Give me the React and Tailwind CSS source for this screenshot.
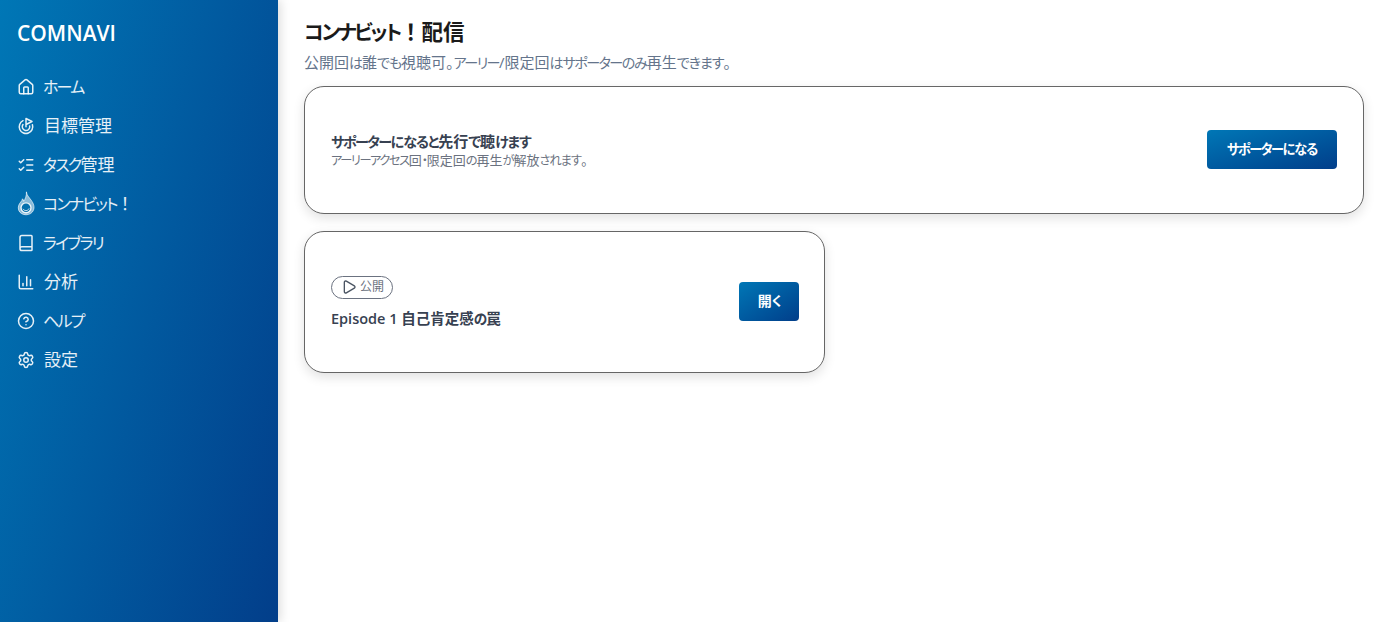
import { House, Goal, ListChecks, Book, ChartColumn, CircleHelp, Settings, Play } from 'lucide-react';

const font = { fontFamily: '"Open Sans", "Noto Sans CJK JP", sans-serif' };

// kana in the reference's font sits much narrower than in Noto, so shrink those runs
function Jp({ children }) {
  return children.split(/([\u30A0-\u30FF]+|[\u3040-\u309F]+|！)/).map((part, i) => {
    if (/^[\u30A0-\u30FF]/.test(part)) {
      return <span key={i} className="text-[0.94em] tracking-[-0.11em]">{part}</span>;
    }
    if (/^[\u3040-\u309F]/.test(part)) {
      return <span key={i} className="text-[0.94em] tracking-[-0.08em]">{part}</span>;
    }
    if (part === '！') {
      return <span key={i} className="[font-feature-settings:normal]">{part}</span>;
    }
    return part;
  });
}

function FlameIcon() {
  return (
    <svg width="20" height="27" viewBox="0 0 20 27" fill="none" stroke="currentColor" strokeLinecap="round">
      <path d="M10.500 1c.1 3.200 2.700 5.300 5.200 8.800 2.900 4 4 7.700 2.500 11.300-1.300 3.100-4.500 4.900-8.200 4.900-3.800 0-6.900-1.900-8.100-5C.7 17.400 2 14.200 4.200 11.800c1-1.100 1.700-2.100 1.900-3.500.8.800 1.300 1.700 1.300 2.800C9.300 8.500 10.800 4.800 10.500 1z" fill="currentColor" fillOpacity="0.6" strokeWidth="0.8" />
      <circle cx="10" cy="18.300" r="5.500" fill="#0470ae" strokeWidth="1.500" />
      <path d="M6.800 19.800c1.500 2.400 5.200 2.200 6.500-.4" strokeWidth="1" />
    </svg>
  );
}

const navItems = [
  { label: 'ホーム', icon: <House size={18} /> },
  { label: '目標管理', icon: <Goal size={18} />, textClass: 'ml-px' },
  { label: 'タスク管理', icon: <ListChecks size={18} /> },
  { label: 'コンナビット！', icon: <FlameIcon /> },
  { label: 'ライブラリ', icon: <Book size={18} /> },
  { label: '分析', icon: <ChartColumn size={18} />, textClass: 'ml-px' },
  { label: 'ヘルプ', icon: <CircleHelp size={18} /> },
  { label: '設定', icon: <Settings size={18} />, textClass: 'ml-px' },
];

function GradientButton({ children, className }) {
  return (
    <button className={`mb-[2px] h-[39px] rounded bg-gradient-to-br from-[#0077b6] to-[#023e8a] text-sm font-semibold text-white ${className}`}>
      <Jp>{children}</Jp>
    </button>
  );
}

export default function App() {
  return (
    <div className="flex h-[622px] w-[1374px] overflow-hidden bg-white [font-feature-settings:'palt']" style={font}>
      <aside className="z-10 flex w-[278px] shrink-0 flex-col bg-[linear-gradient(105deg,#0077b6,#023e8a)] pl-[17px] pt-[18px] text-white shadow-[2px_0_10px_rgba(0,0,0,0.15)]">
        <div className="h-[30px] text-[21px] leading-[30px] font-semibold">COMNAVI</div>
        <nav className="mt-[19px] flex flex-col">
          {navItems.map((item) => (
            <div key={item.label} className="flex h-[39px] items-center gap-[8px] text-[17px] text-white/90">
              <span className="flex w-[18px] shrink-0 justify-center">{item.icon}</span>
              <span className={item.textClass || ''}><Jp>{item.label}</Jp></span>
            </div>
          ))}
        </nav>
      </aside>

      <main className="flex min-w-0 flex-1 flex-col pl-[26px] pr-[10px] pt-[16px]">
        <h1 className="h-[32px] text-[21.5px] leading-[32px] font-bold text-[#1a1a1a]"><Jp>コンナビット！配信</Jp></h1>
        <p className="mt-[4px] h-[20px] text-[15px] leading-[20px] text-[#64748b]"><Jp>公開回は誰でも視聴可。アーリー/限定回はサポーターのみ再生できます。</Jp></p>

        <section className="mt-[14px] flex h-[128px] items-center justify-between rounded-[20px] border border-[#666] bg-white px-[26px] shadow-[0_4px_12px_rgba(0,0,0,0.12)]">
          <div>
            <div className="text-[15px] leading-[20px] font-semibold text-[#374151]"><Jp>サポーターになると先行で聴けます</Jp></div>
            <div className="text-[13px] leading-[16px] text-[#6b7280]"><Jp>アーリーアクセス回・限定回の再生が解放されます。</Jp></div>
          </div>
          <GradientButton className="w-[130px]">サポーターになる</GradientButton>
        </section>

        <section className="mt-[17px] flex h-[142px] w-[521px] items-center justify-between rounded-[20px] border border-[#666] bg-white pl-[26px] pr-[25px] shadow-[0_4px_12px_rgba(0,0,0,0.12)]">
          <div>
            <div className="flex h-[23px] w-[62px] items-center gap-[3px] rounded-full border border-[#6b7280] pl-[9px] text-xs text-[#6b7280]">
              <Play size={16} className="text-[#4b5563]" />
              <span>公開</span>
            </div>
            <div className="mt-[10px] text-[14.5px] leading-[20px] font-semibold text-[#374151]">Episode 1 <Jp>自己肯定感の罠</Jp></div>
          </div>
          <GradientButton className="w-[60px]">開く</GradientButton>
        </section>
      </main>
    </div>
  );
}
